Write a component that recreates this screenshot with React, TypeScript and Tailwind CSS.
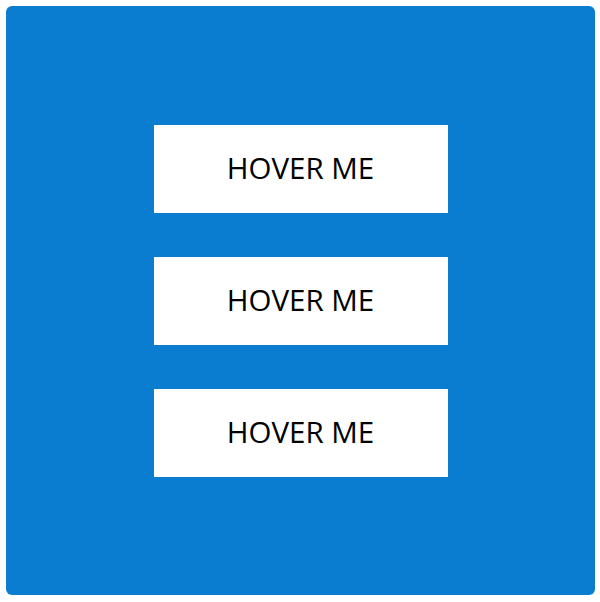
export default function App() {
  return (
    <div className="w-[600px] h-[602px] bg-white p-[6px] pb-[7px]" style={{ fontFamily: '"Open Sans", sans-serif' }}>
      <div className="w-[589px] h-[589px] rounded-[6px] bg-[#0b7dd0] flex flex-col items-center justify-center gap-[44px]">
        {[0, 1, 2].map((i) => (
          <button
            key={i}
            className="w-[294px] h-[88px] bg-white text-black text-[29.5px] flex items-center justify-center"
          >
            HOVER ME
          </button>
        ))}
      </div>
    </div>
  )
}
